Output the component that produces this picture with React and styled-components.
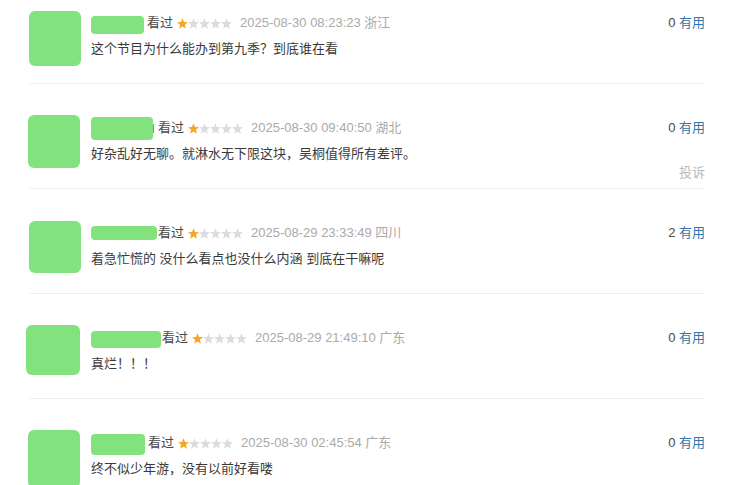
import React from "react";
import styled, { createGlobalStyle } from "styled-components";

const Global = createGlobalStyle`
  html, body { margin: 0; padding: 0; background: #fff; }
  body {
    font-family: "Liberation Sans", Arial, "Noto Sans CJK SC", sans-serif;
    font-size: 13px;
    color: #333;
  }
`;

const List = styled.div`
  margin-left: 30px;
  width: 675px;
`;

const Item = styled.div`
  display: flex;
  align-items: flex-start;
  box-sizing: border-box;
  height: 105px;
  padding-top: 33px;
  border-bottom: 1px solid #eee;
  &:first-child {
    height: 84px;
    padding-top: 12px;
  }
`;

const Avatar = styled.div`
  flex: none;
  width: ${(p) => p.$w}px;
  height: ${(p) => p.$h}px;
  margin-left: ${(p) => p.$dx}px;
  margin-right: ${(p) => 61 - p.$dx - p.$w}px;
  margin-top: ${(p) => p.$dy}px;
  background: #82e37e;
  border-radius: 6px;
`;

const Body = styled.div`
  flex: 1;
  min-width: 0;
  display: flex;
  flex-direction: column;
  gap: 4px;
`;

const Header = styled.div`
  display: flex;
  align-items: center;
  height: 22px;
  line-height: 22px;
  white-space: nowrap;
`;

const Name = styled.span`
  display: inline-block;
  width: ${(p) => p.$w}px;
  height: ${(p) => p.$h}px;
  margin-right: ${(p) => p.$gap}px;
  position: relative;
  top: ${(p) => p.$dy}px;
  background: #82e37e;
  border-radius: 4px;
`;

const Sliver = styled.span`
  display: inline-block;
  width: 2px;
  height: 9px;
  margin-left: -1px;
  margin-right: 4px;
  background: #8a8a8a;
`;

const Watched = styled.span`
  color: #494949;
`;

const Stars = styled.svg`
  flex: none;
  margin-left: 4px;
  margin-right: 8px;
`;

const Meta = styled.span`
  color: #aaa;
`;

const Comment = styled.div`
  line-height: 22px;
  color: #3a3a3a;
  white-space: nowrap;
`;

const Side = styled.div`
  flex: none;
  display: flex;
  flex-direction: column;
  align-items: flex-end;
  gap: 23px;
  line-height: 22px;
`;

const Votes = styled.div`
  color: #494949;
  white-space: nowrap;
`;

const Useful = styled.span`
  color: #3377aa;
`;

const Report = styled.div`
  color: #bbb;
`;

const STAR =
  "5.5,0.3 6.97,4.08 11.02,4.31 7.88,6.87 8.91,10.79 5.5,8.6 2.09,10.79 3.12,6.87 0,4.31 4.03,4.08";

function Rating({ value }) {
  return (
    <Stars width="55" height="11" viewBox="0 0 55 11">
      {[0, 1, 2, 3, 4].map((i) => (
        <polygon
          key={i}
          points={STAR}
          transform={`translate(${i * 11} 0)`}
          fill={i < value ? "#f6a623" : "#dcdcdc"}
        />
      ))}
    </Stars>
  );
}

const reviews = [
  {
    avatar: { w: 52, h: 55, dx: -1, dy: -1 },
    name: { w: 53, h: 18, gap: 3, dy: 2 },
    date: "2025-08-30 08:23:23",
    region: "浙江",
    text: "这个节目为什么能办到第九季？到底谁在看",
    votes: 0,
  },
  {
    avatar: { w: 52, h: 53, dx: -2, dy: -2 },
    name: { w: 62, h: 23, gap: 0, dy: 0 },
    sliver: true,
    date: "2025-08-30 09:40:50",
    region: "湖北",
    text: "好杂乱好无聊。就淋水无下限这块，吴桐值得所有差评。",
    votes: 0,
    report: true,
  },
  {
    avatar: { w: 52, h: 52, dx: -1, dy: -1 },
    name: { w: 66, h: 14, gap: 1, dy: 0 },
    date: "2025-08-29 23:33:49",
    region: "四川",
    text: "着急忙慌的 没什么看点也没什么内涵 到底在干嘛呢",
    votes: 2,
  },
  {
    avatar: { w: 54, h: 50, dx: -4, dy: -2 },
    name: { w: 70, h: 17, gap: 1, dy: 1 },
    date: "2025-08-29 21:49:10",
    region: "广东",
    text: "真烂！！！",
    votes: 0,
  },
  {
    avatar: { w: 52, h: 58, dx: -2, dy: -2 },
    name: { w: 54, h: 21, gap: 3, dy: 1 },
    date: "2025-08-30 02:45:54",
    region: "广东",
    text: "终不似少年游，没有以前好看喽",
    votes: 0,
  },
];

export default function App() {
  return (
    <>
      <Global />
      <List>
        {reviews.map((r, i) => (
          <Item key={i}>
            <Avatar $w={r.avatar.w} $h={r.avatar.h} $dx={r.avatar.dx} $dy={r.avatar.dy} />
            <Body>
              <Header>
                <Name $w={r.name.w} $h={r.name.h} $gap={r.name.gap} $dy={r.name.dy} />
                {r.sliver && <Sliver />}
                <Watched>看过</Watched>
                <Rating value={1} />
                <Meta>
                  {r.date} {r.region}
                </Meta>
              </Header>
              <Comment>{r.text}</Comment>
            </Body>
            <Side>
              <Votes>
                {r.votes} <Useful>有用</Useful>
              </Votes>
              {r.report && <Report>投诉</Report>}
            </Side>
          </Item>
        ))}
      </List>
    </>
  );
}
